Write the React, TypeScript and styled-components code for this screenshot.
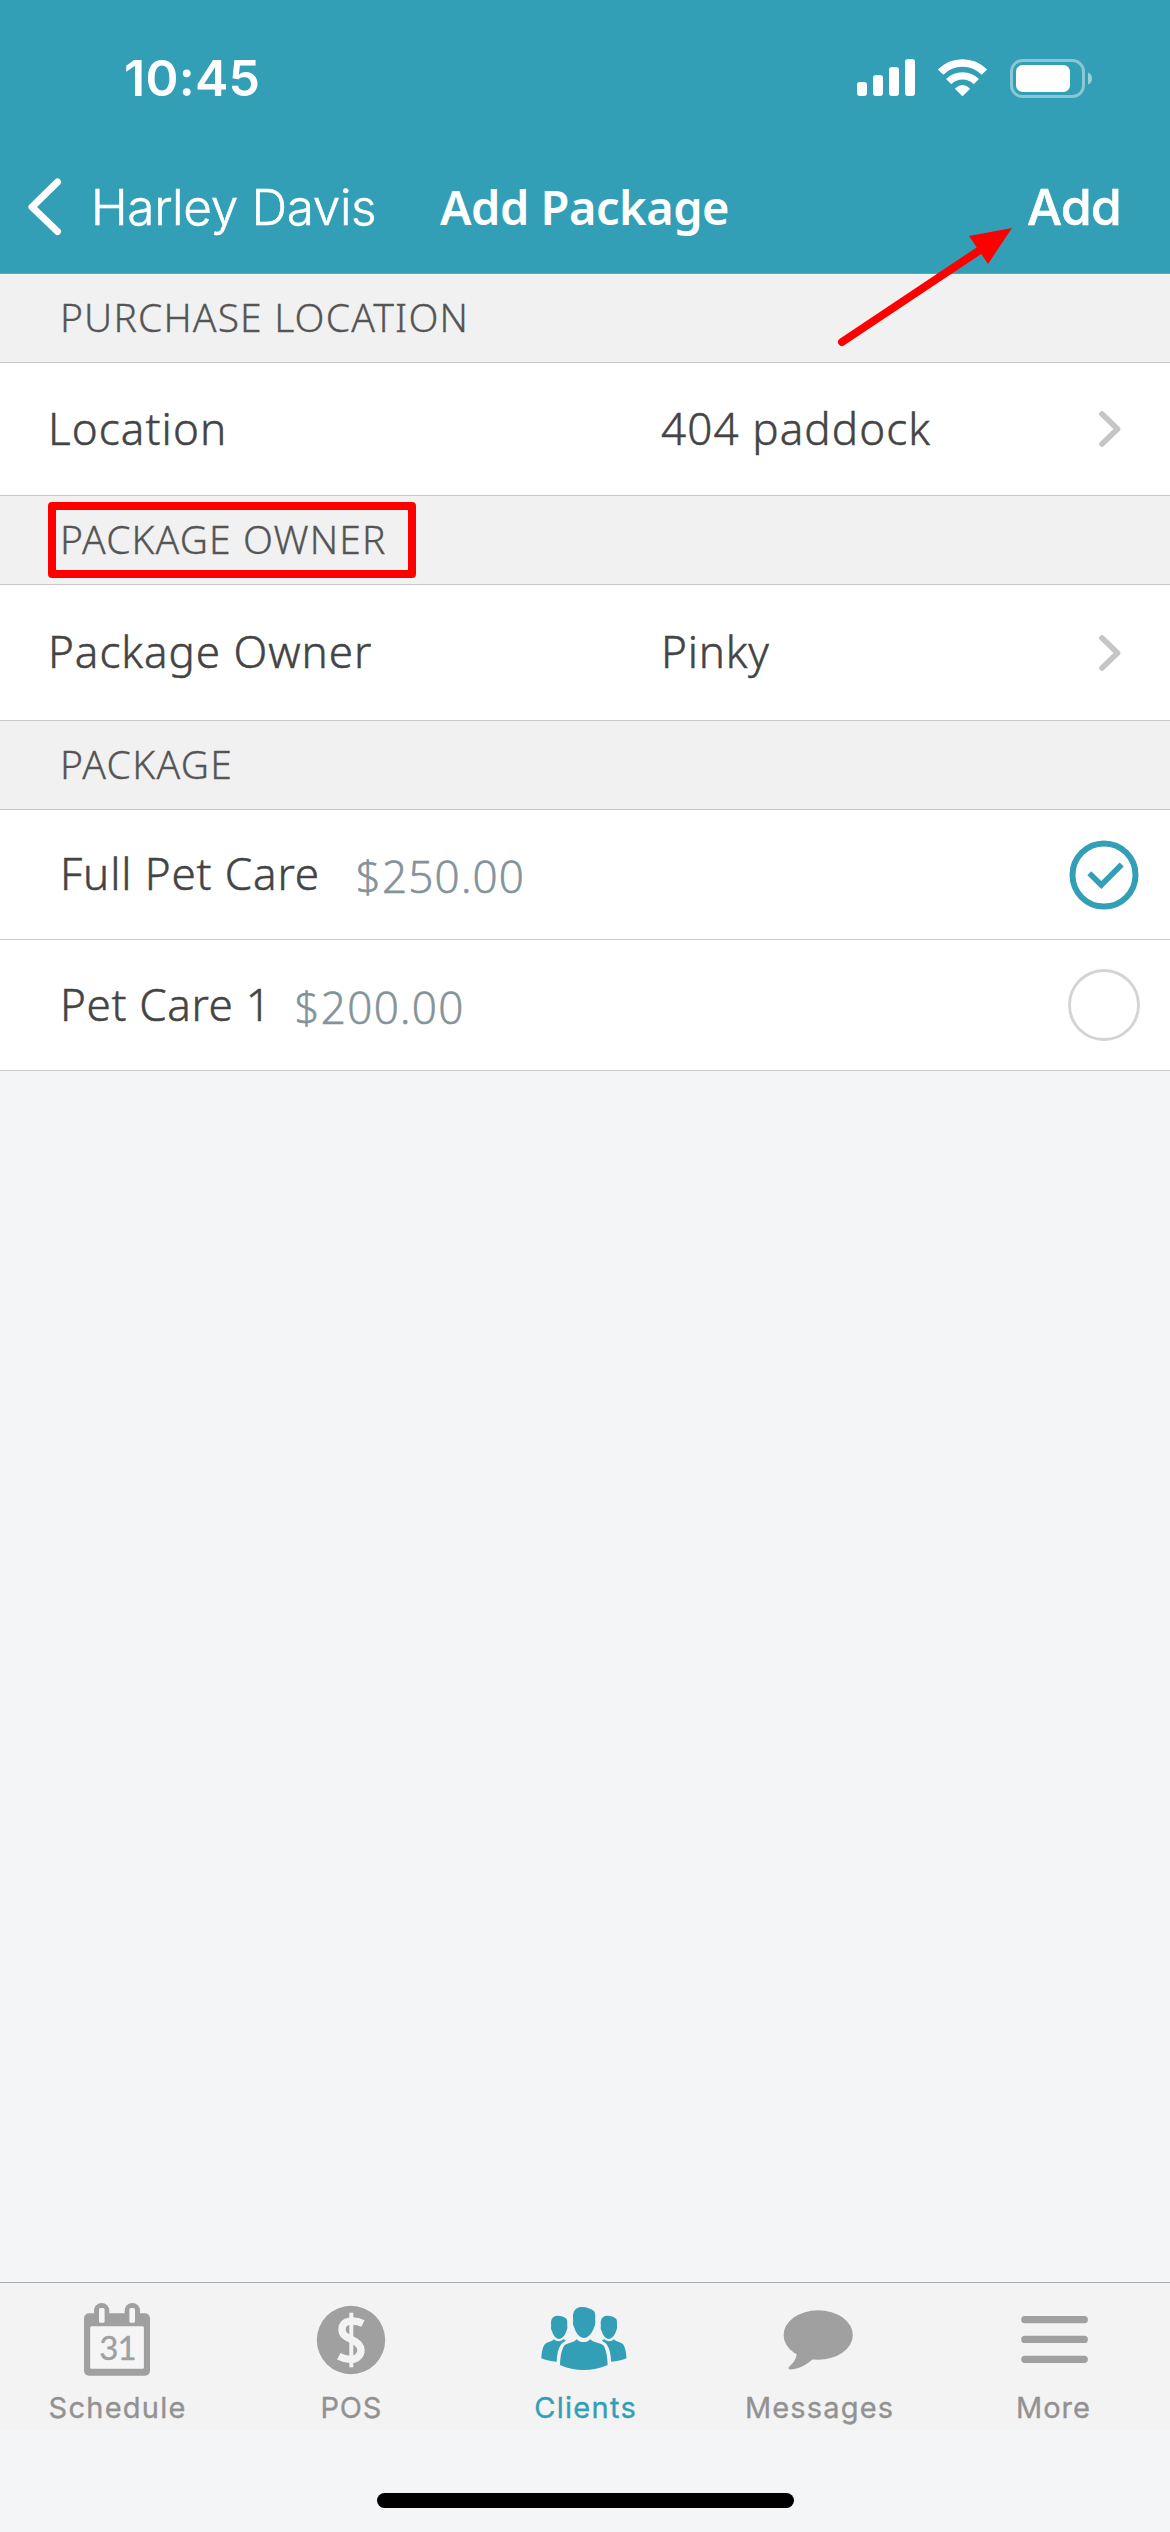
import React from "react";
import styled, { createGlobalStyle } from "styled-components";

const teal = "#329fb7";
const museo = `"Noto Sans", "Open Sans", sans-serif`;
const system = `Inter, "Liberation Sans", sans-serif`;

const GlobalStyle = createGlobalStyle`
  * { box-sizing: border-box; }
  body { margin: 0; background: #f4f5f7; }
  svg { display: block; flex: none; }
`;

const Screen = styled.div`
  position: relative;
  display: flex;
  flex-direction: column;
  width: 1170px;
  height: 2532px;
  overflow: hidden;
  background: #f4f5f7;
  color: #444;
  font-family: ${museo};
`;

const Header = styled.header`
  height: 274px;
  background: ${teal};
  border-bottom: 1px solid #7f9ba1;
  color: #fff;
`;

const StatusBar = styled.div`
  display: flex;
  align-items: center;
  justify-content: space-between;
  height: 156px;
  padding: 0 78px 0 124px;
`;

const Time = styled.span`
  font: 600 50px/60px ${system};
  letter-spacing: 0.3px;
`;

const StatusIcons = styled.div`
  display: flex;
  align-items: center;
  gap: 22px;
`;

const NavBar = styled.nav`
  display: grid;
  grid-template-columns: 1fr auto 1fr;
  align-items: center;
  height: 102px;
  padding: 0 49px 0 26px;
`;

const Back = styled.a`
  display: flex;
  align-items: center;
  gap: 28px;
  font: 300 49.5px/60px ${system};
  letter-spacing: -0.35px;
  white-space: nowrap;
  -webkit-text-stroke: 0.5px currentColor;
`;

const Title = styled.h1`
  margin: 0 0 0 22px;
  font: 600 47px/64px ${museo};
  letter-spacing: -0.5px;
`;

const AddButton = styled.a`
  justify-self: end;
  font: 500 49.5px/60px ${system};
  letter-spacing: -0.6px;
  -webkit-text-stroke: 0.6px currentColor;
`;

const SectionHeader = styled.h2<{ $spacing: number }>`
  position: relative;
  display: flex;
  align-items: center;
  height: 89px;
  margin: 0;
  padding: 0 60px 2px;
  background: #f1f1f1;
  border-bottom: 1px solid #c8c8c8;
  color: #555;
  font: 300 39px/54px ${museo};
  letter-spacing: ${(p) => p.$spacing}px;
  -webkit-text-stroke: 0.3px currentColor;
`;

const Highlight = styled.div`
  position: absolute;
  left: 48px;
  top: 6px;
  width: 368px;
  height: 76px;
  border: 8px solid #f00;
  border-radius: 4px;
`;

const LinkRow = styled.div<{ $height: number }>`
  display: grid;
  grid-template-columns: 613px 1fr auto;
  align-items: center;
  height: ${(p) => p.$height}px;
  padding: 0 48px;
  background: #fff;
  border-bottom: 1px solid #c8c8c8;
`;

const PackageRow = styled.div<{ $height: number }>`
  display: flex;
  align-items: center;
  height: ${(p) => p.$height}px;
  padding: 0 29px 0 60px;
  background: #fff;
  border-bottom: 1px solid #c8c8c8;
`;

const Label = styled.span<{ $spacing: number }>`
  padding-bottom: 3px;
  font: 300 44px/60px ${museo};
  letter-spacing: ${(p) => p.$spacing}px;
  white-space: nowrap;
  -webkit-text-stroke: 0.5px currentColor;
`;

const Price = styled.span<{ $gap: number; $spacing: number }>`
  flex: 1;
  margin-left: ${(p) => p.$gap}px;
  padding-top: 3px;
  color: #84939a;
  font: 300 44px/60px "Open Sans", ${museo};
  letter-spacing: ${(p) => p.$spacing}px;
  -webkit-text-stroke: 0.7px currentColor;
`;

const TabBar = styled.nav`
  display: grid;
  grid-template-columns: repeat(5, 1fr);
  height: 148px;
  margin-top: auto;
  background: #f3f3f3;
  border-top: 1px solid #aaa;
`;

const Tab = styled.a<{ $active?: boolean }>`
  display: flex;
  flex-direction: column;
  align-items: center;
  padding-top: 15px;
  color: ${(p) => (p.$active ? teal : "#a0a0a0")};
`;

const TabLabel = styled.span<{ $active?: boolean; $spacing: number }>`
  margin-top: 5px;
  padding-left: ${(p) => p.$spacing}px;
  color: ${(p) => (p.$active ? teal : "#929292")};
  font: 400 29px/42px ${system};
  letter-spacing: ${(p) => p.$spacing}px;
  -webkit-text-stroke: 0.35px currentColor;
`;

const HomeArea = styled.div`
  display: flex;
  justify-content: center;
  height: 102px;
  padding-top: 63px;
`;

const HomeIndicator = styled.div`
  width: 417px;
  height: 15px;
  border-radius: 8px;
  background: #000;
`;

const Pointer = styled.svg`
  position: absolute;
  left: 830px;
  top: 220px;
  pointer-events: none;
`;

const SignalIcon = () => (
  <svg width="58" height="38" viewBox="0 0 58 38" fill="#fff">
    <rect x="0" y="23" width="10" height="14" rx="3" />
    <rect x="16" y="16" width="10" height="21" rx="3" />
    <rect x="32" y="8" width="10" height="29" rx="3" />
    <rect x="48" y="0" width="10" height="37" rx="3" />
  </svg>
);

const WifiIcon = () => (
  <svg width="51" height="38" viewBox="0 0 51 38" fill="none" stroke="#fff">
    <path d="M3.6 13.2A30.6 30.6 0 0 1 47.4 13.2" strokeWidth="7.6" />
    <path d="M11.7 22.6A19.5 19.5 0 0 1 39.3 22.6" strokeWidth="7.4" />
    <path d="M18.9 29.8Q25.5 24 32.1 29.8L25.5 36.2Z" fill="#fff" strokeWidth="1.6" strokeLinejoin="round" />
  </svg>
);

const BatteryIcon = () => (
  <svg width="82" height="39" viewBox="0 0 82 39">
    <rect x="1.5" y="1.5" width="72" height="36" rx="11" fill="none" stroke="#fff" strokeOpacity=".42" strokeWidth="3" />
    <rect x="6" y="6" width="54" height="27" rx="6.5" fill="#fff" />
    <path d="M78 13.5C80.5 14.5 82 16.8 82 19.5S80.5 24.5 78 25.5Z" fill="#fff" fillOpacity=".5" />
  </svg>
);

const BackChevron = () => (
  <svg width="37" height="60" viewBox="0 0 37 60" fill="none" stroke="#fff" strokeWidth="7" strokeLinecap="round" strokeLinejoin="round">
    <path d="M31.5 5L6 30L31.5 54.5" />
  </svg>
);

const RowChevron = () => (
  <svg width="23" height="38" viewBox="0 0 23 38" fill="none" stroke="#c5c5c7" strokeWidth="5.6" strokeLinecap="round" strokeLinejoin="round">
    <path d="M3 4L18.5 19L3 34" />
  </svg>
);

const Radio = ({ checked }: { checked?: boolean }) => (
  <svg width="74" height="74" viewBox="0 0 74 74" fill="none">
    {checked ? (
      <g stroke={teal}>
        <circle cx="37" cy="37" r="31.5" strokeWidth="6" />
        <path d="M22.3 35.2L34.3 47L54.7 26.5" strokeWidth="5.6" />
      </g>
    ) : (
      <circle cx="37" cy="37" r="34.5" stroke="#d3d3d3" strokeWidth="2.8" />
    )}
  </svg>
);

const CalendarIcon = () => (
  <svg width="100" height="84" viewBox="0 0 100 84" fill="currentColor">
    <rect x="17" y="15.3" width="66" height="62.5" rx="5" />
    <rect x="27" y="5" width="15.3" height="24" rx="7.6" />
    <rect x="57.7" y="5" width="15.3" height="24" rx="7.6" />
    <g fill="#f5f5f5">
      <rect x="32" y="10" width="5.6" height="14.7" rx="1.5" />
      <rect x="62.4" y="10" width="5.6" height="14.7" rx="1.5" />
      <rect x="23.2" y="28.3" width="53.7" height="42.5" rx="1.5" />
    </g>
    <text x="50.5" y="62" textAnchor="middle" fontFamily="Lato, sans-serif" fontWeight="400" fontSize="33" letterSpacing="-1" stroke="currentColor" strokeWidth="0.4">31</text>
  </svg>
);

const DollarIcon = () => (
  <svg width="100" height="84" viewBox="0 0 100 84" fill="none" stroke="#f3f3f3">
    <circle cx="50" cy="42" r="34.2" fill="currentColor" stroke="none" />
    <path d="M62 25.5C57.5 23.3 53 22.5 49 23.2C43 24 41 27.5 41 31.5C41 37.5 46 39.5 51 41.8C57 44.5 60 47 60 52C60 58 55 61.6 49 61.4C45 61.3 41.5 60.3 37.8 58.3" strokeWidth="7.4" />
    <path d="M50.3 14.7V69.3" strokeWidth="4" />
  </svg>
);

const headPath =
  "M38 20C37.5 13 41 9.5 46 9C51 8.7 56 10.5 59 13C60.6 15 60.3 19 60.2 22C60.8 25 59.8 28 58.5 31C56 37 52 40 49 40C45.5 40 41 36 39.5 30C38.3 28 37.4 25 38.2 23Z";
const sidePath =
  "M6.3 60.3C6.6 54 7.5 50 9.7 46.3C11.5 44.5 16 44 19 41.3C21 43.8 26 43.8 28.3 41.3L31 42.3C30.5 43.2 28.5 43.5 25.7 47C22.8 51.5 22 57 21.7 63.7C16 63.3 10.5 62 6.3 60.3Z";

const ClientsIcon = () => (
  <svg width="100" height="84" viewBox="0 0 100 84" fill="currentColor">
    <path d={headPath} />
    <path d={headPath} transform="translate(-11.7 10.95) scale(.73 .75)" />
    <path d={headPath} transform="translate(38 10.95) scale(.73 .75)" />
    <path d={sidePath} />
    <path d={sidePath} transform="translate(97.8 0) scale(-1 1)" />
    <path d="M41.7 41.2C45 45 52 45 55.3 41.2C59 45 65.5 44.5 68.3 47.3C71.5 52 72.3 59 72.7 67C65 70.5 57 72 48.7 72S32.5 70.5 25 67C25.3 59 26.3 52 29.5 47.3C32.5 44.5 38.5 45 41.7 41.2Z" />
  </svg>
);

const MessageIcon = () => (
  <svg width="100" height="84" viewBox="0 0 100 84" fill="currentColor">
    <ellipse cx="49.2" cy="37" rx="34.6" ry="24.7" />
    <path d="M27.9 54C27.7 62 23.5 65.5 19.8 69C19 70.5 20 71.6 22 71.4C31 70.5 38 66.5 44 61Z" />
  </svg>
);

const MenuIcon = () => (
  <svg width="100" height="84" viewBox="0 0 100 84" fill="none" stroke="currentColor" strokeWidth="7.2" strokeLinecap="round">
    <path d="M21.8 21.7H81.3M21.8 41.4H81.3M21.8 61.3H81.3" />
  </svg>
);

const tabs = [
  { label: "Schedule", spacing: 1.25, Icon: CalendarIcon },
  { label: "POS", spacing: 0.8, Icon: DollarIcon },
  { label: "Clients", spacing: 1.3, Icon: ClientsIcon, active: true },
  { label: "Messages", spacing: 1.15, Icon: MessageIcon },
  { label: "More", spacing: 1, Icon: MenuIcon },
];

export default function App() {
  return (
    <Screen>
      <GlobalStyle />
      <Header>
        <StatusBar>
          <Time>10:45</Time>
          <StatusIcons>
            <SignalIcon />
            <WifiIcon />
            <BatteryIcon />
          </StatusIcons>
        </StatusBar>
        <NavBar>
          <Back>
            <BackChevron />
            Harley Davis
          </Back>
          <Title>Add Package</Title>
          <AddButton>Add</AddButton>
        </NavBar>
      </Header>

      <SectionHeader $spacing={1.15}>PURCHASE LOCATION</SectionHeader>
      <LinkRow $height={133}>
        <Label $spacing={1.1}>Location</Label>
        <Label $spacing={1.1}>404 paddock</Label>
        <RowChevron />
      </LinkRow>

      <SectionHeader $spacing={1.1}>
        PACKAGE OWNER
        <Highlight />
      </SectionHeader>
      <LinkRow $height={136}>
        <Label $spacing={0.95}>Package Owner</Label>
        <Label $spacing={0.8}>Pinky</Label>
        <RowChevron />
      </LinkRow>

      <SectionHeader $spacing={1.3}>PACKAGE</SectionHeader>
      <PackageRow $height={130}>
        <Label $spacing={0.85}>Full Pet Care</Label>
        <Price $gap={36} $spacing={1.15}>$250.00</Price>
        <Radio checked />
      </PackageRow>
      <PackageRow $height={131}>
        <Label $spacing={0.65}>Pet Care 1</Label>
        <Price $gap={23} $spacing={1.3}>$200.00</Price>
        <Radio />
      </PackageRow>

      <TabBar>
        {tabs.map(({ label, spacing, Icon, active }) => (
          <Tab key={label} $active={active}>
            <Icon />
            <TabLabel $active={active} $spacing={spacing}>{label}</TabLabel>
          </Tab>
        ))}
      </TabBar>
      <HomeArea>
        <HomeIndicator />
      </HomeArea>

      <Pointer width="190" height="130" viewBox="0 0 190 130">
        <path d="M12 122L150 30" stroke="#f00" strokeWidth="8" strokeLinecap="round" />
        <path d="M182 8L139 16L158 44Z" fill="#f00" />
      </Pointer>
    </Screen>
  );
}
